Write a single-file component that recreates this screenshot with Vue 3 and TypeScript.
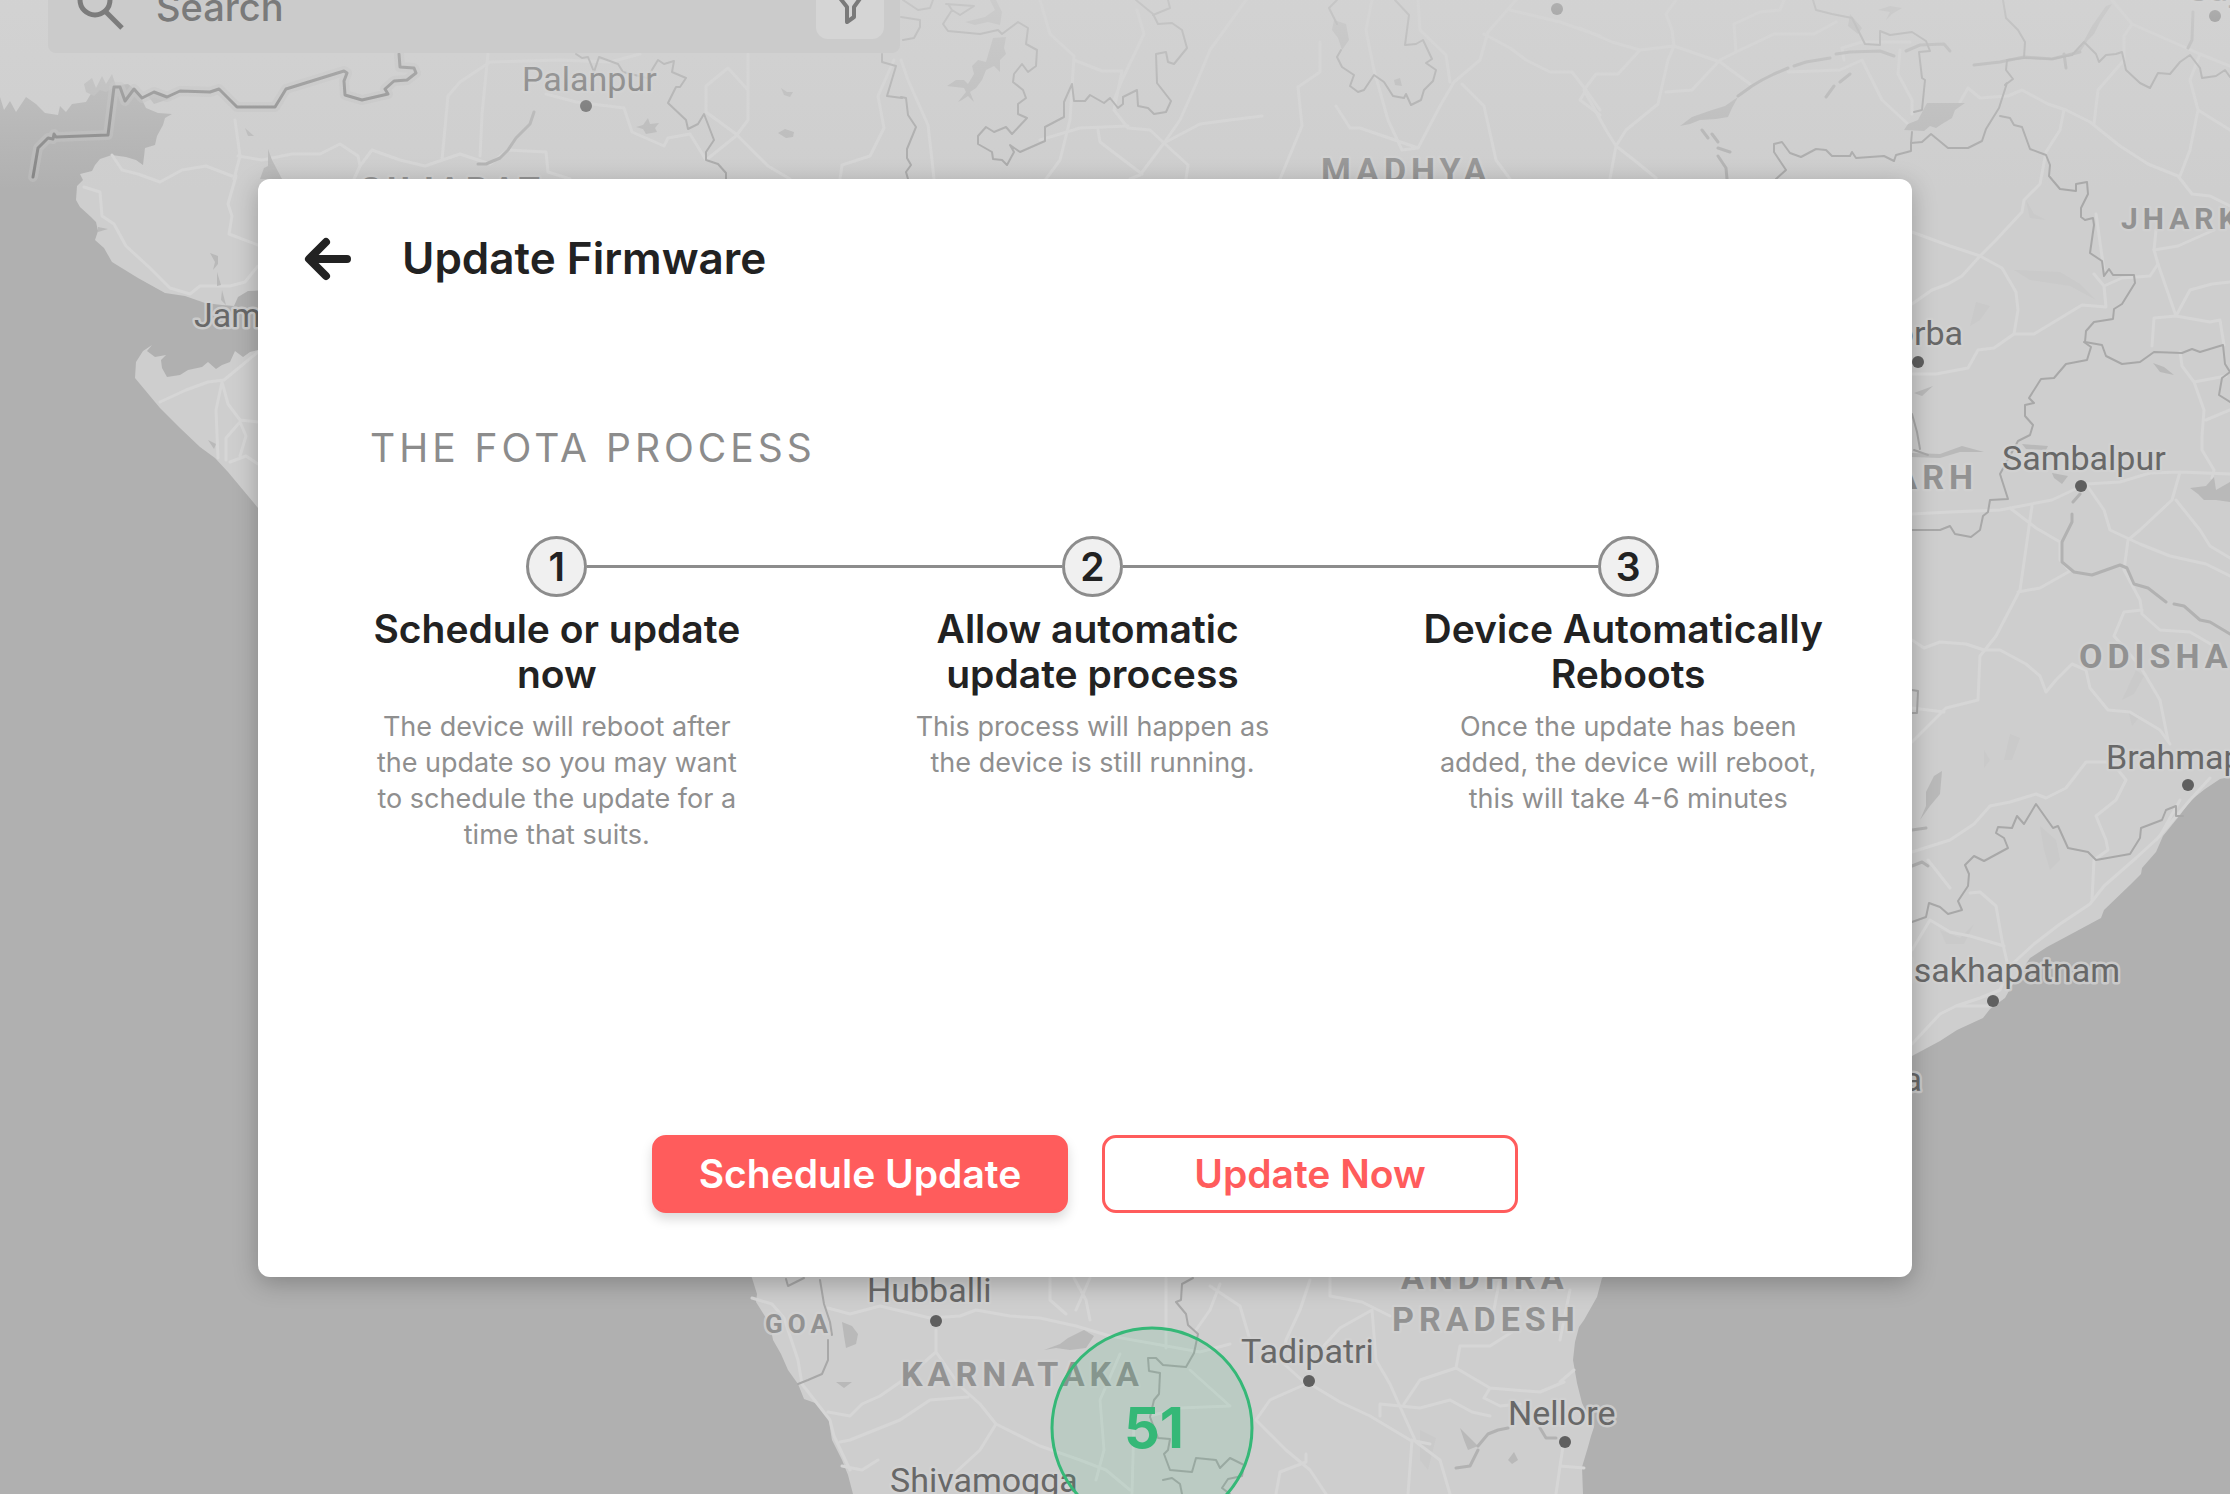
<script setup lang="ts">
interface Step {
  title: string[]
  text: string[]
}

interface Place {
  name: string
  x: number
  y: number
  end?: boolean
}

interface Region extends Place {
  size: number
}

const steps: Step[] = [
  {
    title: ['Schedule or update', 'now'],
    text: ['The device will reboot after', 'the update so you may want', 'to schedule the update for a', 'time that suits.'],
  },
  {
    title: ['Allow automatic\u00a0', 'update process'],
    text: ['This process will happen as', 'the device is still running.'],
  },
  {
    title: ['Device Automatically\u00a0', 'Reboots'],
    text: ['Once the update has been', 'added, the device will reboot,', 'this will take 4-6 minutes'],
  },
]

const places: Place[] = [
  { name: 'Palanpur', x: 522, y: 91 },
  { name: 'Jamnagar', x: 194, y: 327 },
  { name: 'Korba', x: 1963, y: 345, end: true },
  { name: 'Sambalpur', x: 2002, y: 470 },
  { name: 'Brahmapur', x: 2106, y: 769 },
  { name: 'Visakhapatnam', x: 2120, y: 982, end: true },
  { name: 'Kakinada', x: 1922, y: 1091, end: true },
  { name: 'Hubballi', x: 867, y: 1302 },
  { name: 'Tadipatri', x: 1241, y: 1363 },
  { name: 'Nellore', x: 1508, y: 1425 },
  { name: 'Shivamogga', x: 890, y: 1492 },
  { name: 'Gaya', x: 2186, y: 1 },
]

const regions: Region[] = [
  { name: 'GUJARAT', x: 359, y: 201, size: 34 },
  { name: 'MADHYA', x: 1321, y: 182, size: 34 },
  { name: 'JHARKHAND', x: 2121, y: 229, size: 30 },
  { name: 'CHHATTISGARH', x: 1978, y: 489, size: 34, end: true },
  { name: 'ODISHA', x: 2079, y: 668, size: 34 },
  { name: 'GOA', x: 765, y: 1333, size: 26 },
  { name: 'ANDHRA', x: 1401, y: 1289, size: 34 },
  { name: 'PRADESH', x: 1392, y: 1331, size: 34 },
  { name: 'KARNATAKA', x: 901, y: 1386, size: 34 },
]

const dots: number[][] = [
  [586, 106], [1557, 9], [2215, 16], [1918, 362], [2081, 486], [2188, 785],
  [1993, 1001], [936, 1321], [1309, 1381], [1565, 1442],
]

const water: string[] = [
  'M0 97L4 110 10 101 16 112 26 97 36 104 45 113 58 115 60 106 66 112 72 104 86 102 92 92 104 87 112 86 128 84 138 92 146 108 158 113 172 114 165 118 163 125 157 136 155 145 145 148 143 165 136 160 126 157 112 155 100 159 95 165 92 171 80 174 83 180 77 186 76 200 80 207 91 217 96 222 98 231 95 240 104 248 112 262 138 278 165 293 185 296 205 303 222 305 234 306 238 297 248 291 270 290 270 346 258 350 250 352 243 357 235 351 230 362 222 365 216 369 208 362 202 367 188 370 180 375 167 377 162 368 161 360 166 355 155 357 147 351 152 345 143 351 136 362 135 378 145 390 160 408 180 428 200 447 215 458 228 472 258 508 500 800 752 1278 757 1294 756 1302 766 1318 770 1325 773 1340 781 1354 788 1370 798 1384 804 1399 818 1404 828 1416 832 1440 842 1460 848 1475 853 1494 0 1494Z',
  'M2230 777L2220 779 2205 789 2190 801 2180 815 2163 836 2156 852 2142 868 2141 874 2130 885 2104 910 2101 918 2075 932 2047 947 2030 958 2015 980 2005 998 1990 1009 1983 1018 1957 1030 1940 1041 1912 1056 1800 1110 1602 1278 1597 1297 1584 1320 1579 1327 1575 1342 1573 1360 1577 1383 1582 1403 1594 1427 1591 1436 1588 1447 1582 1467 1583 1494 2230 1494Z',
]

const lakes: string[] = [
  'M84 84L92 78 96 88 102 76 106 84 112 74 116 86 106 92 100 90 94 96 86 92Z',
  'M148 96L156 92 164 96 172 98 160 102 154 104Z',
  'M245 128L254 136 248 136Z',
  'M268 149L272 160 282 179 260 179 264 168 268 166Z',
  'M636 127L643 125 648 118 650 124 659 123 655 128 657 132 646 134 643 129Z',
  'M781 88L787 92 793 92 790 97 784 95Z M778 133L785 129 794 132 793 137 786 138Z',
  'M990 0L996 0 1002 12 1000 25 988 22 975 25 965 22 985 17 995 10Z',
  'M993 38L1006 37 1004 48 1006 54 1000 60 1000 72 994 66 986 70 982 80 976 88 970 92 974 102 968 96 962 100 958 102 966 92 964 88 947 86 956 80 964 80 968 84 974 74 972 66 978 60 986 62Z',
  'M1334 20L1346 24 1349 40 1342 50 1338 38 1332 30Z',
  'M1394 80L1400 78 1402 86 1395 85Z',
  'M1850 14L1862 28 1858 34 1848 26Z M1878 10L1890 6 1902 8 1892 14 1886 20 1890 12Z',
  'M1680 126L1692 117 1712 110 1725 106 1738 97 1732 108 1728 117 1716 119 1700 120 1690 124Z',
  'M1927 103L1965 103 1955 110 1952 118 1942 124 1936 128 1930 126 1924 131 1904 130 1908 124 1918 120Z',
  'M2106 6L2112 4 2100 22 2094 34 2088 40 2080 52 2068 56 2080 48 2092 26Z',
  'M2153 363L2164 367 2174 375 2160 372Z',
  'M2052 473L2068 476 2062 484 2054 478Z',
  'M2022 444L2048 446 2046 450 2026 449Z',
  'M2190 488L2206 486 2214 477 2216 490 2230 482 2230 502 2216 500 2204 500 2198 494Z',
  'M1914 393L1933 386 1922 396Z M1912 453L1940 454 1962 446 1984 452 1960 452 1940 458 1912 457Z',
  'M1942 771L1934 776 1926 792 1926 806 1920 820 1930 806 1940 794Z',
  'M210 253L218 256 218 264 213 270 215 262Z M217 272L221 285 217 286Z M208 440L216 444 214 449Z M222 290L226 305 221 300Z',
  'M98 227L108 229 98 232Z',
  'M842 1322L852 1326 858 1334 856 1344 846 1348 844 1336Z M836 1382L852 1382 844 1388Z',
  'M1044 1350L1060 1344 1068 1338 1084 1330 1094 1336 1086 1348 1070 1350 1056 1348Z',
  'M1460 1428L1472 1440 1478 1446 1468 1450 1464 1440Z M1508 1460L1514 1452 1518 1460 1512 1464Z',
]

const borders: string[] = [
  'M901 97L906 98 908 115 916 127 907 149 907 158 911 165 906 172 908 179',
  'M901 17L920 20 920 27 914 38 903 40M903 0L918 10 930 8 933 0',
  'M948 4L952 10 943 24 948 31 980 34 998 30 1002 34 1018 22 1028 28 1026 44 1037 50 1036 66 1028 72 1022 64 1014 74 1013 82 1023 90 1026 98 1018 104 1018 114 1027 118 1012 134 1006 127 994 132 986 127 978 136 978 144 992 152 993 159 1002 160 1007 165 1014 152 1010 145 1020 152 1045 141 1045 127 1064 117 1064 102 1072 84 1074 101 1085 101 1090 95 1104 103 1110 98 1118 108 1123 104 1123 97 1137 90 1138 106 1148 108 1154 114 1166 112 1171 101 1157 83 1156 54 1166 52 1168 62 1174 64 1187 48 1182 30 1172 23 1158 24 1153 14 1136 0M1153 15L1170 8 1168 0M946 4L974 6 960 15 952 10',
  'M1337 0L1329 8 1337 24M1341 50L1337 57 1342 67 1354 75 1350 86 1358 92 1364 90 1374 75 1384 82 1393 96 1404 98 1406 94 1411 105 1421 100 1424 90 1433 81 1436 70 1426 63 1432 59 1423 40 1416 44 1405 45 1409 15 1395 0',
  'M576 54L582 58 588 57 594 72 599 57 618 64 623 72 647 78 658 60 664 64 674 61 672 72 686 78 680 87 676 87 668 103 686 120 688 129 698 124 704 114 714 140 706 152 706 160 718 164 726 173 726 179M882 54L882 62 896 66 887 96 902 98',
  'M1813 0L1816 10 1832 14 1852 18 1858 30 1865 44 1880 45 1880 31 1890 35 1912 32 1926 41 1930 51 1919 52 1922 78 1925 80 1922 110 1914 112',
  'M1776 179L1786 170 1774 152 1774 144 1782 142 1790 153 1801 157 1816 149 1826 150 1832 156 1850 156 1852 152 1856 158 1884 156 1894 161 1896 155 1911 151 1911 143 1922 142 1931 134 1948 148 1968 148 1982 141 1986 129 1999 108 2007 83 2005 85 2013 79 2006 70 2007 60 2024 58 2025 42 2018 30 2006 18 2003 0',
  'M1911 143L1912 132M2000 116L2010 118 2014 125 2022 127 2030 149 2046 155 2050 165 2049 176 2060 189 2076 191 2076 184 2087 182 2088 194 2081 208 2081 217 2085 220 2093 218 2094 225 2090 253 2102 261 2104 276 2109 269 2113 275 2134 275 2135 283 2122 304 2114 309 2113 319 2094 322 2086 331 2085 342 2102 345 2106 356 2122 364 2140 362 2154 352 2182 353 2192 349 2200 352 2223 345 2225 364 2230 372 2222 378 2219 395 2230 402',
  'M2084 342L2091 347 2087 360 2066 364 2054 378 2041 379 2029 398 2034 403 2025 405 2025 416 2033 425 2030 435 2018 441 2000 474 2008 499 1990 500 1988 512 1983 516 1980 530 1971 537 1955 534 1950 526 1940 530 1912 530',
  'M2024 58L2052 59 2072 55 2084 42 2096 54 2099 62 2106 55 2116 54 2122 52 2126 70 2140 83 2150 88 2158 73 2170 74 2180 62 2190 55 2200 68 2202 78 2216 76 2225 70 2230 77',
  'M1912 690L1918 691 1917 713 1912 713',
  'M1912 922L1926 917 1929 903 1940 907 1948 914 1962 910 1958 901 1968 886 1969 874 1965 865 1974 856 1984 861 2008 848 2004 838 1996 833 1998 827 2012 828 2017 816 2024 824 2036 804 2053 828 2058 826 2068 848 2088 852 2096 860 2130 854 2140 838 2141 828 2162 820 2166 810 2176 806 2176 816 2183 816',
  'M1912 414L1917 432 1920 449M1914 450L1928 455',
  'M786 1279L788 1286 804 1278M820 1280L822 1292 824 1304 830 1322 832 1335M828 1340L828 1360 822 1374 808 1380 798 1384',
  'M1193 1278L1182 1284 1181 1300 1176 1302 1186 1314 1188 1325 1198 1334 1194 1353 1186 1367 1163 1365 1156 1358 1148 1358 1149 1371 1160 1373 1159 1394 1154 1400 1150 1417 1158 1438 1170 1439 1168 1450 1164 1454 1170 1470 1192 1472 1196 1458 1216 1460 1220 1468 1230 1458 1244 1465 1242 1476 1228 1479 1222 1488 1230 1494M1163 1480L1172 1478 1180 1484 1182 1494',
]

const rivers: string[] = [
  'M534 112L530 124 516 138 508 150 500 158 486 164 478 164',
  'M1738 96L1752 86 1762 80 1774 74 1788 68M1794 66L1806 62 1830 58M1836 54L1850 52 1880 51 1894 56',
  'M1906 51L1920 45 1944 44 1950 51',
  'M1974 65L2000 62 2024 57 2052 59 2080 52',
  'M1826 97L1834 86M1840 82L1850 74M1702 130L1708 138M1712 134L1718 142M1718 148L1730 152M1718 156L1726 168 1727 179',
  'M2080 494L2073 502M2072 514L2072 522 2062 542 2062 562 2074 572 2092 575 2120 565 2127 568 2134 584 2148 588 2166 602M2174 604L2184 606 2200 620 2210 622 2230 634',
  'M2193 12L2192 40 2188 48M2064 54L2066 68M1478 1446L1488 1434 1498 1430 1508 1428M1540 1428L1546 1438 1556 1438M1478 1450L1470 1466 1456 1468',
  'M1912 866L1922 862 1928 866M1912 830L1926 828',
]

const roads: string[] = [
  'M235 120L240 156 234 179M238 156L262 160 292 154 320 154 340 144 358 156 360 166 354 179M360 166L372 150 400 160 425 166 460 154 490 164 508 150 546 152 548 172 570 179',
  'M442 160L448 96 460 82 490 62 560 60 610 62 640 54M488 54L482 114 480 156',
  'M112 155L122 170 138 174 160 182 182 170 206 166 232 176',
  'M546 94L576 102 624 108 632 132 664 146 668 138 690 134 706 160 736 136 748 120 748 54M748 90L728 68 706 86 706 112 736 134 768 166 790 179',
  'M840 179L842 165 870 156 884 128 878 96 894 60',
  'M901 60L908 80 928 125 932 160 934 179',
  'M1040 0L1050 34 1074 56 1070 120 1060 160 1046 179M1074 60L1102 71 1122 71 1114 110 1128 128 1150 130 1164 143 1200 124 1230 120 1262 116M1137 10L1144 34 1122 80 1114 100',
  'M1246 0L1210 50 1196 84 1180 120 1164 143 1140 175 1130 179M1164 143L1188 165 1186 179M1040 140L1080 128 1128 126M1098 130L1100 142 1142 174',
  'M1372 0L1366 30 1374 70 1388 120 1402 150 1418 148 1440 106 1454 82 1480 60 1488 32 1516 0M1418 148L1360 128 1350 128 1336 106M1418 0L1420 30 1446 55 1450 82M1320 42L1320 72 1298 87 1302 126 1280 179M1462 84L1484 106 1496 160 1510 179',
  'M1484 34L1510 48 1526 60 1550 72 1572 72 1586 90 1600 110M1510 10L1560 22 1600 36M1586 90L1580 100 1600 115',
  'M1580 28L1612 42 1640 50 1674 46 1672 30 1666 14 1676 0M1674 46L1720 62 1750 84M1640 50L1618 74 1596 74 1584 90 1606 130 1616 146 1610 179M1616 146L1626 130 1658 104 1668 60 1674 46M1666 92L1692 90 1720 60 1736 52 1734 24 1760 12 1780 10 1784 0M1736 52L1774 34 1814 34 1836 22M1616 146L1634 160 1656 178',
  'M1788 72L1840 70 1862 60 1882 100 1908 124M1844 60L1842 48 1862 42 1910 42M1900 50L1898 74 1912 100 1912 114',
  'M1960 102L1968 88 1980 98 2008 96 2022 90 2048 104 2066 110 2090 122 2120 146 2148 164 2178 176 2192 194 2210 196 2230 206',
  'M2064 110L2060 130 2046 152 2040 184 2024 200 2022 212 1996 240 1980 256 1962 276 1948 284 1932 290 1912 304M1912 232L1950 246 1980 256 2002 268 2016 292 2018 310 2014 334 1994 348 1978 350 1968 368 1936 374 1912 374M2014 334L2034 334 2082 305 2106 307 2104 286 2094 274M2104 286L2122 278 2150 276 2158 264 2154 250 2156 230M2096 214L2104 270',
  'M2154 250L2178 246 2214 230M2158 264L2176 316 2154 318 2152 346M2176 316L2190 290 2212 284 2230 282M2176 316L2210 322 2220 320 2224 345',
  'M2112 0L2132 24 2200 54 2230 66M2132 24L2124 36 2124 60 2098 90 2094 124M2200 54L2190 80 2198 110 2190 150 2180 176M2198 110L2230 130',
  'M2180 352L2182 366 2194 382 2204 410 2202 436 2202 450 2214 470 2212 478M2194 382L2226 376M2206 420L2230 410',
  'M1912 514L1950 512 2000 510 2052 500 2086 484 2120 482 2150 473 2180 472 2230 474M2086 484L2104 510 2110 530 2140 544 2170 556 2206 564 2230 576M2180 472L2172 500 2140 530 2128 540 2124 570 2140 600 2142 614 2160 630 2190 632 2214 646',
  'M2032 506L2020 590 1996 636 1980 656 1978 700 1946 708 1912 742M2010 508L2036 528 2060 542 2060 560 2070 571 2040 588 2018 592M1912 640L1924 648 1940 642 1966 644 1984 650 2000 650 2026 664 2040 676 2046 692 2056 680 2072 664 2086 670 2090 688 2108 710 2130 712 2160 730 2170 744M2176 500L2200 530 2210 546 2230 558',
  'M2142 610L2124 612 2114 636 2140 666 2160 700 2168 740M1912 708L1944 712',
  'M1912 852L1950 840 1974 824 1990 806 2010 802 2036 794 2046 798 2066 788 2086 762 2112 762 2126 780 2116 800 2096 816 2106 840 2108 850 2094 860 2092 900',
  'M2180 800L2160 836 2136 858 2104 886 2090 904 2060 924 2034 944 2010 966 2000 990 1980 998 1956 1006 1940 1014 1912 1044M1928 860L1950 888M1970 893L1980 892 1996 906 2002 940 2008 966M1912 950L1930 920 1950 932 1970 936 2004 946M1956 1006L1988 1006M2210 778L2190 800 2156 840',
  'M84 187L100 192 102 216 114 224 126 246 150 268 170 288 190 294 200 286 230 286 245 282 258 266M236 176L228 204 232 216 229 234 258 245',
  'M160 402L186 390 208 382 224 380 258 352M222 382L216 410 218 458M222 382L228 404 240 420 258 422M240 422L226 438 226 460M240 422L246 436 240 456M230 462L246 456 258 464',
  'M828 1308L850 1314 880 1306 930 1318 960 1316 976 1310 1010 1316 1040 1318 1076 1326 1110 1336 1144 1342 1200 1352 1230 1344M936 1330L936 1352 906 1378 880 1396 862 1404 850 1416 828 1412M936 1352L960 1386 980 1404 996 1424 1040 1446 1080 1460 1106 1470 1130 1490M968 1397L930 1400 900 1420 880 1428 850 1440 840 1442M842 1466L862 1470 878 1460M996 1424L980 1450 956 1472M752 1298L772 1304 784 1318 798 1360 802 1384 830 1420 834 1436 850 1470',
  'M1050 1278L1050 1300 1066 1314M1074 1278L1086 1300 1090 1320M1090 1278L1076 1310M1166 1278L1166 1348M1220 1284L1210 1310 1196 1330M1210 1286L1240 1306 1250 1340M1310 1280L1300 1310 1286 1340 1282 1362 1306 1384M1306 1384L1270 1400 1256 1420 1286 1450 1310 1470 1326 1494M1310 1384L1340 1402 1370 1416 1410 1440 1430 1444M1372 1310L1376 1360 1390 1384 1406 1420 1416 1442 1440 1460 1450 1494M1330 1278L1330 1296 1362 1302 1390 1316M1372 1310L1340 1328 1320 1350',
  'M1380 1416L1380 1404 1420 1408 1450 1400 1472 1412 1490 1416M1404 1404L1420 1380 1456 1368 1460 1346 1490 1346 1512 1332M1456 1368L1490 1388 1540 1392 1564 1382M1490 1388L1484 1398 1500 1406 1520 1404M1560 1382L1574 1370M1570 1290L1560 1340M1500 1278L1490 1330M1412 1440L1408 1494M1564 1440L1560 1466 1556 1494M1560 1466L1584 1468M1276 1494L1280 1472 1306 1462 1306 1454M1120 1354L1100 1400 1104 1450 1096 1480M1190 1370L1230 1406 1180 1408 1150 1416M1134 1420L1132 1494',
]

const reliefs: string[] = [
  'M2014 270L2060 272 2080 284 2096 300 2070 286 2030 280Z',
  'M1976 302L1990 306 1980 320 1970 326Z',
  'M2010 734L2020 738 2012 760 2004 760Z',
  'M2136 670L2144 676 2134 694 2122 700Z',
  'M2040 826L2056 840 2060 860 2050 870 2044 850Z',
  'M1940 930L1960 938 1974 924 1964 944 1946 944Z',
  'M2128 710L2140 716 2132 726Z M1984 750L1990 760 1984 768Z',
  'M2026 200L2034 214 2046 220 2030 218Z',
  'M1420 1430L1436 1438 1428 1470 1420 1460Z',
]
</script>

<template>
  <main class="screen">
    <svg class="map" viewBox="0 0 2230 1494" preserveAspectRatio="xMinYMin slice" role="img" aria-label="Device map">
      <defs>
        <linearGradient id="haze" x1="0" y1="0" x2="0" y2="1">
          <stop offset="0" stop-color="#d4d4d4" stop-opacity="0.7" />
          <stop offset="1" stop-color="#d4d4d4" stop-opacity="0" />
        </linearGradient>
      </defs>
      <rect class="land" width="2230" height="1494" />
      <path v-for="d in reliefs" :key="d" class="relief" :d="d" />
      <path v-for="d in water" :key="d" class="water" :d="d" />
      <path v-for="d in roads" :key="d" class="road" :d="d" />
      <path v-for="d in lakes" :key="d" class="lake" :d="d" />
      <path v-for="d in rivers" :key="d" class="river" :d="d" />
      <path v-for="d in borders" :key="d" class="border" :d="d" />
      <g>
        <path
          v-for="layer in ['glow', 'core']"
          :key="layer"
          :class="layer"
          d="M33 177L38 148 48 138 53 139 54 134 56 137 108 135 114 87 120 87 125 101 134 89 142 98 154 92 167 97 180 91 210 92 219 89 237 107 275 107 286 89 344 71 347 73 344 81 345 95 362 100 388 94 385 89 394 81 407 80 416 73 414 68 400 67 399 54"
        />
      </g>
      <text v-for="r in regions" :key="r.name" class="region" :class="{ end: r.end }" :x="r.x" :y="r.y" :font-size="r.size">{{ r.name }}</text>
      <text v-for="p in places" :key="p.name" class="place" :class="{ end: p.end }" :x="p.x" :y="p.y">{{ p.name }}</text>
      <circle v-for="d in dots" :key="d.join()" class="dot" :cx="d[0]" :cy="d[1]" r="6" />
      <circle class="cluster" cx="1152" cy="1428" r="100" />
      <text class="cluster-count" x="1154" y="1448">51</text>
      <rect width="2230" height="190" fill="url(#haze)" />
    </svg>

    <form class="search" @submit.prevent>
      <svg class="search-icon" viewBox="0 0 48 48" aria-hidden="true">
        <circle cx="19" cy="17" r="15" />
        <path d="M29 28L46 45" />
      </svg>
      <input class="search-input" type="text" placeholder="Search" aria-label="Search" />
      <button class="filter" type="button" aria-label="Filter">
        <svg viewBox="0 0 36 36" aria-hidden="true">
          <path d="M4 4H32L22 18V28L15 33V18Z" />
        </svg>
      </button>
    </form>

    <section class="dialog" role="dialog" aria-labelledby="dialog-title">
      <header class="dialog-head">
        <button class="back" type="button" aria-label="Back">
          <svg viewBox="0 0 48 48" aria-hidden="true">
            <path d="M43 25H6M22 8L5 25L22 42" />
          </svg>
        </button>
        <h1 id="dialog-title">Update Firmware</h1>
      </header>

      <h2 class="caption">THE FOTA PROCESS</h2>

      <ol class="steps">
        <li v-for="(step, i) in steps" :key="i" class="step">
          <div class="marker"><span class="number">{{ i + 1 }}</span></div>
          <h3><template v-for="(line, n) in step.title" :key="n"><br v-if="n" />{{ line }}</template></h3>
          <p><template v-for="(line, n) in step.text" :key="n"><br v-if="n" />{{ line }}</template></p>
        </li>
      </ol>

      <footer class="actions">
        <button class="action primary" type="button">Schedule Update</button>
        <button class="action outline" type="button">Update Now</button>
      </footer>
    </section>
  </main>
</template>

<style>
body {
  margin: 0;
}
</style>

<style scoped>
.screen {
  position: relative;
  box-sizing: border-box;
  display: flex;
  min-height: 100vh;
  padding: 179px 318px 217px 258px;
  overflow: hidden;
  background: #b0b0b0;
  color: #222;
  font-family: Inter, 'Liberation Sans', sans-serif;
}

.map {
  position: absolute;
  inset: 0;
  width: 100%;
  height: 100%;
}

.land {
  fill: #cecece;
}

.relief {
  fill: #cacaca;
}

.water {
  fill: #b0b0b0;
}

.lake {
  fill: #b9b9b9;
}

.road,
.river,
.border,
.glow,
.core {
  fill: none;
  stroke-linejoin: round;
  stroke-linecap: round;
}

.road {
  stroke: #d6d6d6;
  stroke-width: 3;
}

.river {
  stroke: #b2b2b2;
  stroke-width: 3;
}

.border {
  stroke: #a8a8a8;
  stroke-width: 2;
}

.glow {
  stroke: #bfbfbf;
  stroke-opacity: 0.5;
  stroke-width: 10;
}

.core {
  stroke: #838383;
  stroke-width: 3;
}

.region,
.place {
  font-family: Roboto, 'Liberation Sans', sans-serif;
  paint-order: stroke;
  stroke: #d2d2d2;
  stroke-opacity: 0.8;
  stroke-width: 5px;
  stroke-linejoin: round;
}

.region {
  fill: #929292;
  font-weight: 700;
  letter-spacing: 5px;
}

.place {
  fill: #686868;
  font-size: 34px;
}

.end {
  text-anchor: end;
}

.dot {
  fill: #5f5f5f;
}

.cluster {
  fill: #35b877;
  fill-opacity: 0.12;
  stroke: #35b877;
  stroke-width: 3;
}

.cluster-count {
  fill: #35b877;
  font-size: 56px;
  font-weight: 700;
  text-anchor: middle;
}

.search {
  position: absolute;
  top: -39px;
  left: 48px;
  box-sizing: border-box;
  display: flex;
  align-items: center;
  gap: 32px;
  width: 852px;
  height: 92px;
  padding: 0 16px 0 28px;
  border-radius: 8px;
  background: #cbcbcb;
}

.search-icon {
  width: 48px;
  height: 48px;
  fill: none;
  stroke: #7c7c7c;
  stroke-width: 5;
}

.search-input {
  flex: 1;
  min-width: 0;
  padding: 0;
  border: 0;
  outline: 0;
  background: none;
  color: #7a7a7a;
  font: 500 38px/48px Inter, sans-serif;
}

.search-input::placeholder {
  color: #7a7a7a;
  opacity: 1;
}

.filter {
  display: grid;
  place-items: center;
  width: 68px;
  height: 64px;
  padding: 0;
  border: 0;
  border-radius: 12px;
  background: #d5d5d5;
}

.filter svg {
  width: 36px;
  height: 36px;
  fill: none;
  stroke: #7a7a7a;
  stroke-width: 4;
  stroke-linejoin: round;
}

.dialog {
  position: relative;
  display: flex;
  flex: 1;
  flex-direction: column;
  min-width: 0;
  border-radius: 12px;
  background: #fff;
  box-shadow: 0 6px 24px rgba(0, 0, 0, 0.25);
}

.dialog-head {
  display: flex;
  align-items: center;
  gap: 50px;
  padding: 51px 46px 0;
}

.back {
  width: 48px;
  height: 56px;
  padding: 0;
  border: 0;
  background: none;
}

.back svg {
  display: block;
  width: 48px;
  height: 48px;
  margin: 4px 0;
  fill: none;
  stroke: #222;
  stroke-width: 8;
  stroke-linecap: round;
  stroke-linejoin: round;
}

h1,
h2,
h3,
p {
  margin: 0;
}

h1 {
  font-size: 44px;
  font-weight: 600;
  line-height: 56px;
}

.caption {
  margin: 138px 0 0 112px;
  color: #8c8c8c;
  font-size: 39px;
  font-weight: 400;
  line-height: 48px;
  letter-spacing: 4px;
}

.steps {
  display: grid;
  grid-template-columns: repeat(3, minmax(0, 1fr));
  margin: 64px 16px 64px 31px;
  padding: 0;
  list-style: none;
}

.step {
  text-align: center;
}

.marker {
  display: flex;
  align-items: center;
  margin-bottom: 9px;
}

.marker::before,
.marker::after {
  content: '';
  flex: 1;
  height: 3px;
  background: #8c8c8c;
}

.step:first-child .marker::before,
.step:last-child .marker::after {
  background: none;
}

.number {
  box-sizing: border-box;
  width: 61px;
  height: 61px;
  border: 3px solid #8c8c8c;
  border-radius: 50%;
  background: #f0f0f0;
  font-size: 39px;
  font-weight: 600;
  line-height: 55px;
}

h3 {
  font-size: 39px;
  font-weight: 600;
  line-height: 45px;
}

p {
  margin-top: 13px;
  color: #8f8f8f;
  font-size: 27px;
  line-height: 36px;
}

.actions {
  display: flex;
  justify-content: center;
  gap: 34px;
  margin-top: auto;
  padding-bottom: 64px;
}

.action {
  width: 416px;
  height: 78px;
  padding: 0;
  border: 3px solid #ff5c5c;
  border-radius: 14px;
  font: 600 39px/48px Inter, sans-serif;
}

.primary {
  background: #ff5c5c;
  color: #fff;
  box-shadow: 0 6px 12px rgba(0, 0, 0, 0.15);
}

.outline {
  background: #fff;
  color: #ff5c5c;
}
</style>
